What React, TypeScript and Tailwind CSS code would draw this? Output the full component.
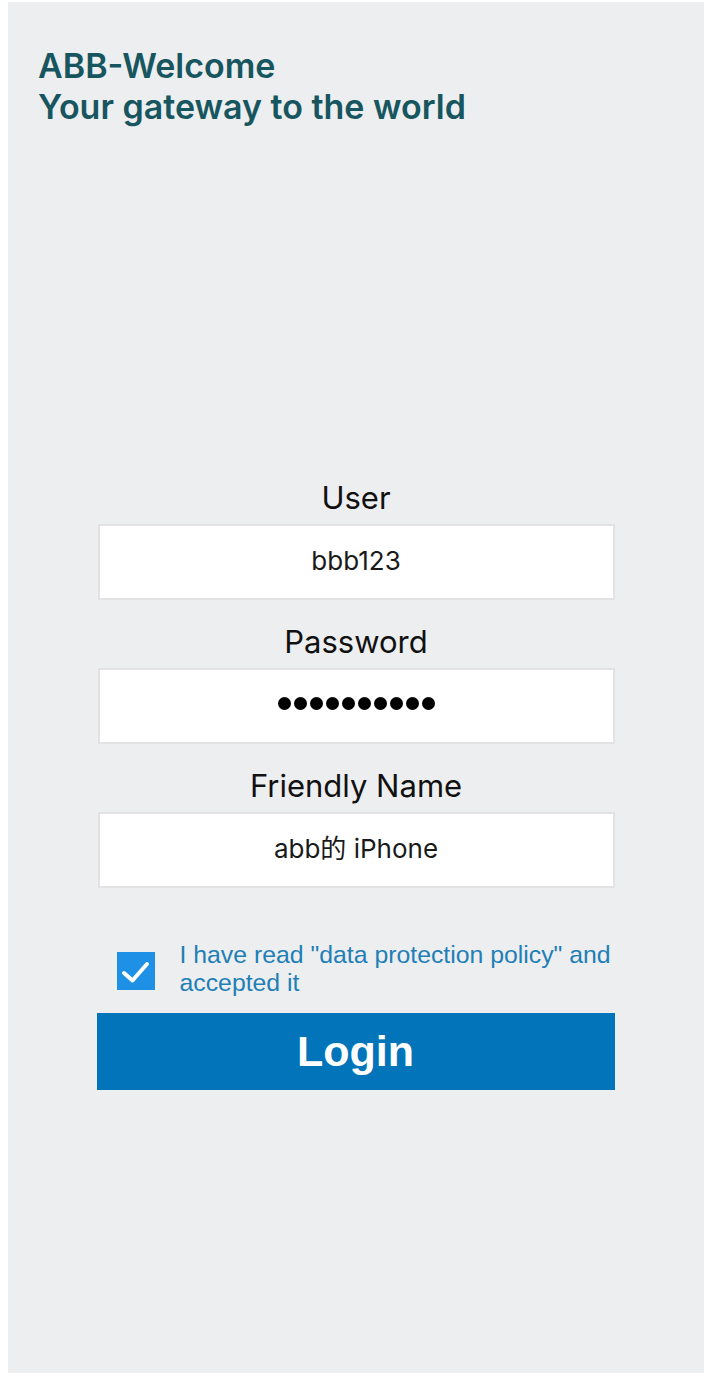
import React from "react";

export default function App() {
  return (
    <div className="min-h-screen w-full bg-white">
      <div className="ml-2 mt-[2px] flex h-[1371px] w-[696px] flex-col bg-[#edeef0]">
        <div
          className="pl-[30px] pt-[43px] text-[34px] font-semibold leading-[41px] text-[#17565f]"
          style={{ fontFamily: "Inter, 'Noto Sans', sans-serif" }}
        >
          <div>ABB-Welcome</div>
          <div>Your gateway to the world</div>
        </div>

        <div
          className="mx-auto mt-[353px] flex w-[517px] flex-col"
          style={{ fontFamily: "Inter, 'Noto Sans CJK SC', sans-serif" }}
        >
          <Field label="User">
            <span className="-mt-[4px]">bbb123</span>
          </Field>
          <div className="h-6" />
          <Field label="Password">
            <div className="-mt-[5px] flex items-center gap-[3px]">
              {Array.from({ length: 10 }).map((_, i) => (
                <span key={i} className="h-[13px] w-[13px] rounded-full bg-black" />
              ))}
            </div>
          </Field>
          <div className="h-6" />
          <Field label="Friendly Name">
            <span className="-mt-[4px]">abb的 iPhone</span>
          </Field>

          <div className="mt-[56px] flex items-center gap-[25px] pl-[19px]">
            <div className="flex h-[38px] w-[38px] shrink-0 items-center justify-center bg-[#1e90e6]">
              <svg width="38" height="38" viewBox="0 0 38 38">
                <path
                  d="M7 21 L15.5 28.5 L30 12"
                  fill="none"
                  stroke="white"
                  strokeWidth="4"
                  strokeLinecap="round"
                  strokeLinejoin="round"
                />
              </svg>
            </div>
            <p
              className="-mt-[3px] text-[24.8px] leading-[28px] text-[#1f7fb6]"
              style={{ fontFamily: "'Liberation Sans', Arial, sans-serif" }}
            >
              I have read "data protection policy" and accepted it
            </p>
          </div>

          <button
            className="mt-[16px] flex h-[77px] w-[518px] -ml-px items-center justify-center bg-[#0274b9] text-[43px] font-bold text-white"
            style={{ fontFamily: "'Liberation Sans', Arial, sans-serif" }}
          >
            Login
          </button>
        </div>
      </div>
    </div>
  );
}

function Field({ label, children }: { label: string; children: React.ReactNode }) {
  return (
    <div className="flex flex-col">
      <div className="mb-2 text-center text-[31px] leading-[36px] text-[#111]">{label}</div>
      <div className="flex h-[76px] items-center justify-center border-2 border-[#e2e2e4] bg-white text-[26px] text-[#1a1a1a]">
        {children}
      </div>
    </div>
  );
}
